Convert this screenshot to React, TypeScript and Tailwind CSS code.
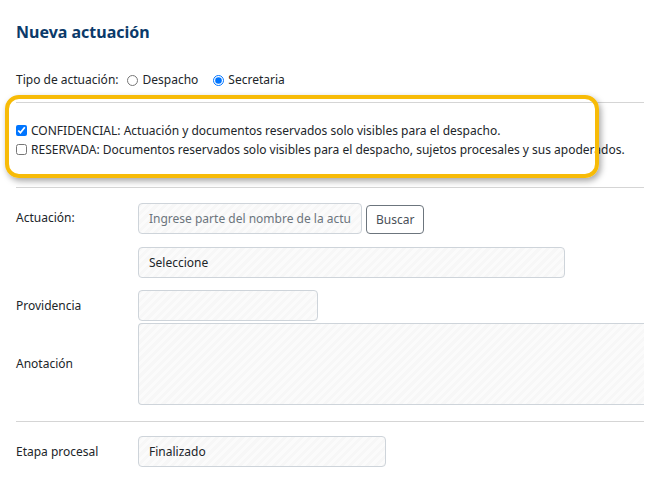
import React from "react";

const field =
  "h-[31px] overflow-hidden whitespace-nowrap rounded-[4px] border border-[#ced4da] bg-[repeating-linear-gradient(135deg,#f7f7f7_0px,#f7f7f7_3px,#fbfbfb_3px,#fbfbfb_6px)] px-[10px] text-[12px] text-[#212529] flex items-center outline-none";

export default function App() {
  return (
    <div className="relative min-h-[492px] w-[651px] bg-white font-['Noto_Sans',sans-serif] text-[12px] text-[#212529]">
      <div className="pl-4 pr-[7px]">
        {/* titulo */}
        <h2 className="pt-[21px] text-[16px] font-bold leading-[22px] text-[#0b3a6a]">Nueva actuación</h2>

        {/* tipo */}
        <div className="mt-[27px] flex h-[20px] items-center whitespace-nowrap">
          <span>Tipo de actuación:</span>
          <label className="ml-[8px] flex items-center gap-[5px]">
            <input type="radio" name="tipo" className="m-0 h-[11px] w-[11px]" />
            Despacho
          </label>
          <label className="ml-[15px] flex items-center gap-[4px]">
            <input type="radio" name="tipo" defaultChecked className="m-0 h-[11px] w-[11px]" />
            Secretaria
          </label>
        </div>

        <hr className="mt-[12px] border-t border-[#d5d5d5]" />

        <div className="whitespace-nowrap pt-[18px] pb-[28px]">
          <label className="flex h-[19px] items-center gap-[4px]">
            <input type="checkbox" defaultChecked className="m-0 h-[11px] w-[11px]" />
            CONFIDENCIAL: Actuación y documentos reservados solo visibles para el despacho.
          </label>
          <label className="flex h-[19px] items-center gap-[4px]">
            <input type="checkbox" className="m-0 h-[11px] w-[11px]" />
            RESERVADA: Documentos reservados solo visibles para el despacho, sujetos procesales y sus apoderados.
          </label>
        </div>

        <hr className="border-t border-[#d5d5d5]" />

        {/* formulario */}
        <div className="mt-[14px] flex items-center">
          <span className="w-[122px]">Actuación:</span>
          <input
            readOnly
            placeholder="Ingrese parte del nombre de la actuación"
            className={`${field} w-[224px] placeholder:text-[#6c757d]`}
          />
          <button className="ml-[4px] mt-[3px] h-[29px] rounded-[4px] border border-[#6c757d] px-[9px] text-[12px] text-[#495057]">
            Buscar
          </button>
        </div>

        <div className="mt-[13px] flex items-center">
          <span className="w-[122px]" />
          <div className={`${field} w-[427px]`}>Seleccione</div>
        </div>

        <div className="mt-[12px] flex items-center">
          <span className="w-[122px]">Providencia</span>
          <div className={`${field} w-[180px]`} />
        </div>

        <div className="mt-[2px] flex items-center">
          <span className="w-[122px]">Anotación</span>
          <div className={`${field} h-[82px] flex-1 rounded-r-none border-r-0`} />
        </div>

        <hr className="mt-[16px] border-t border-[#d5d5d5]" />

        <div className="mt-[14px] flex items-center">
          <span className="w-[122px]">Etapa procesal</span>
          <div className={`${field} w-[248px]`}>Finalizado</div>
        </div>
      </div>

      {/* resaltado */}
      <div className="pointer-events-none absolute left-[5px] top-[95px] h-[83px] w-[594px] rounded-[14px] border-[4px] border-[#f7bb07] shadow-[2px_3px_6px_rgba(0,0,0,0.35)]" />
    </div>
  );
}
